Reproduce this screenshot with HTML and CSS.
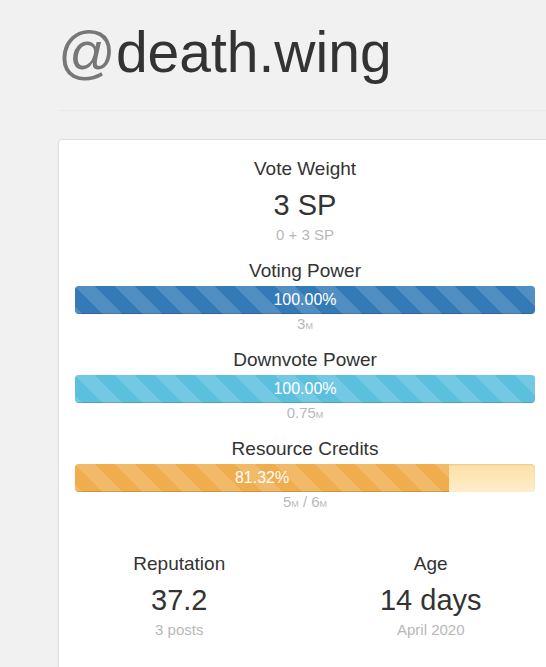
FILE: index.html
```html
<!DOCTYPE html>
<html lang="en">
<head>
    <meta charset="UTF-8">
    <meta name="viewport" content="width=device-width, initial-scale=1.0">
    <title>@death.wing</title>
    <link rel="stylesheet" href="styles.css">
</head>
<body>
    <div class="container">
        <header class="page-header">
            <h1><span class="at">@</span>death.wing</h1>
        </header>

        <div class="card">
            <section class="stat stat-weight">
                <div class="stat-title">Vote Weight</div>
                <div class="stat-value">3 SP</div>
                <div class="stat-sub">0 + 3 SP</div>
            </section>

            <section class="stat">
                <div class="stat-title">Voting Power</div>
                <div class="progress">
                    <div class="progress-bar bar-primary" style="width: 100%">100.00%</div>
                </div>
                <div class="stat-sub">3<small>M</small></div>
            </section>

            <section class="stat">
                <div class="stat-title">Downvote Power</div>
                <div class="progress">
                    <div class="progress-bar bar-info" style="width: 100%">100.00%</div>
                </div>
                <div class="stat-sub">0.75<small>M</small></div>
            </section>

            <section class="stat">
                <div class="stat-title">Resource Credits</div>
                <div class="progress progress-warning">
                    <div class="progress-bar bar-warning" style="width: 81.32%">81.32%</div>
                </div>
                <div class="stat-sub">5<small>M</small> / 6<small>M</small></div>
            </section>

            <div class="stat-row">
                <section class="stat">
                    <div class="stat-title">Reputation</div>
                    <div class="stat-value">37.2</div>
                    <div class="stat-sub">3 posts</div>
                </section>
                <section class="stat">
                    <div class="stat-title">Age</div>
                    <div class="stat-value">14 days</div>
                    <div class="stat-sub">April 2020</div>
                </section>
            </div>
        </div>
    </div>
</body>
</html>
```

FILE: styles.css
```css
:root {
    --page-bg: #f1f1f1;
    --text-color: #333333;
    --muted-color: #b8b8b8;
    --border-color: #dddddd;
    --stripe: rgba(255, 255, 255, 0.15);
}

*, *::before, *::after {
    box-sizing: border-box;
}

html, body {
    overflow: hidden;
}

body {
    margin: 0;
    background-color: var(--page-bg);
    color: var(--text-color);
    font-family: "Liberation Sans", Arial, Helvetica, sans-serif;
}

.container {
    width: 495px;
    margin-left: 57px;
}

.page-header {
    margin-left: 1px;
    padding-bottom: 26px;
    border-bottom: 1px solid #e9e9e9;
    margin-bottom: 28px;
}

h1 {
    margin: 21px 0 0 0;
    font-size: 57px;
    font-weight: 400;
    line-height: 1.1;
}

h1 .at {
    color: #777777;
}

.card {
    margin-left: 1px;
    background-color: #ffffff;
    border: 1px solid var(--border-color);
    border-radius: 4px;
    box-shadow: 0 1px 1px rgba(0, 0, 0, 0.05);
    padding: 18px 16px 40px;
    text-align: center;
}

.stat + .stat {
    margin-top: 13px;
}

.stat-weight + .stat {
    margin-top: 15px;
}

.stat-title {
    font-size: 19px;
    line-height: 22px;
}

.stat-value {
    margin-top: 6px;
    font-size: 29px;
    line-height: 38px;
}

.stat-sub {
    margin-top: 1px;
    font-size: 15px;
    line-height: 20px;
    color: var(--muted-color);
}

.stat-sub small {
    font-size: 0.6em;
}

/* ----- Progress bars ----- */
.progress {
    margin-top: 4px;
    height: 28px;
    border-radius: 4px;
    background-color: #f5f5f5;
    box-shadow: inset 0 1px 2px rgba(0, 0, 0, 0.1);
    overflow: hidden;
    display: flex;
}

.progress + .stat-sub {
    margin-top: 0;
}

.progress-warning {
    background-image: linear-gradient(to bottom, #fde0a4, #feedcc);
}

.progress-bar {
    height: 100%;
    color: #ffffff;
    font-size: 16px;
    line-height: 28px;
    text-align: center;
    box-shadow: inset 0 -1px 0 rgba(0, 0, 0, 0.15);
    background-image: linear-gradient(45deg, var(--stripe) 25%, transparent 25%, transparent 50%, var(--stripe) 50%, var(--stripe) 75%, transparent 75%, transparent);
    background-size: 40px 40px;
}

.bar-primary { background-color: #337ab7; }
.bar-info { background-color: #5bc0de; }
.bar-warning { background-color: #f0ad4e; }

/* ----- Reputation / age ----- */
.stat-row {
    display: grid;
    grid-template-columns: 1fr 1fr;
    margin: 39px -21.5px 0;
}

.stat-row .stat + .stat {
    margin-top: 0;
}
```
